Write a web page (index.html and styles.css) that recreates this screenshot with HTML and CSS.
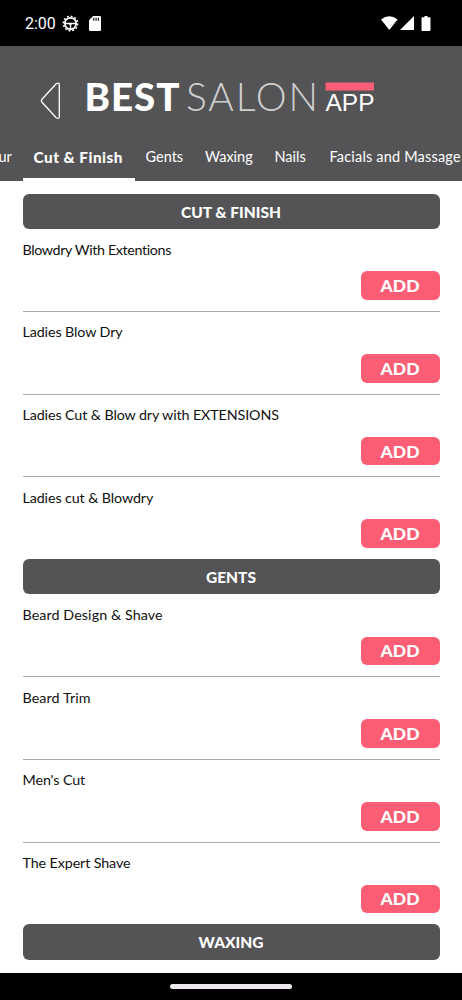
FILE: index.html
```html
<!DOCTYPE html>
<html lang="en">
<head>
  <meta charset="utf-8">
  <meta name="viewport" content="width=device-width, initial-scale=1">
  <title>Best Salon App</title>
  <link rel="stylesheet" href="styles.css">
</head>
<body>
  <div class="status-bar">
    <span class="clock">2:00</span>
    <svg class="gear" width="17" height="17" viewBox="0 0 17 17">
      <circle cx="8.5" cy="8.5" r="7.2" fill="none" stroke="#fff" stroke-width="1.5" stroke-dasharray="1.9 1.87"/>
      <circle cx="8.5" cy="8.5" r="5.7" fill="none" stroke="#fff" stroke-width="1.7"/>
      <path d="M3 8.5h11M8.5 8.5v5.5" stroke="#fff" stroke-width="1.4"/>
      <path d="M6.5 8h4L8.5 11Z" fill="#fff"/>
    </svg>
    <svg class="sd-card" width="12" height="15" viewBox="0 0 12 15">
      <path d="M4.2 0H10.7Q12 0 12 1.3V13.7Q12 15 10.7 15H1.3Q0 15 0 13.7V4.2Z" fill="#fff"/>
      <path d="M4.8 1.7v3M7.1 1.7v3M9.4 1.7v3" stroke="#000" stroke-width="1.1"/>
    </svg>
    <svg class="signals" width="50" height="15" viewBox="0 0 50 15">
      <path d="M0 3.6Q8.3 -3.1 16.6 3.6L8.3 14Z" fill="#fff"/>
      <path d="M33 0V14H19Z" fill="#fff"/>
      <path d="M43.5 0h3v1.2h2.3q.7 0 .7.7v12.2q0 .9-.9.9h-7.2q-.9 0-.9-.9v-12.2q0-.7.7-.7h2.3z" fill="#fff"/>
    </svg>
  </div>

  <header class="header">
    <div class="brand">
      <svg class="back" width="21" height="38" viewBox="0 0 21 38">
        <path d="M16.2 1.8L2 17.3Q.7 18.8 2 20.3L16.2 35.7Q19.3 37.6 19.3 34.5V3Q19.3 0 16.2 1.8Z" fill="none" stroke="#fff" stroke-width="1.3"/>
      </svg>
      <svg class="logo" width="290" height="36" viewBox="0 0 290 36">
        <text class="logo-best" x="-2.5" y="31.5" textLength="95">BEST</text>
        <text class="logo-salon" x="99" y="31.5" textLength="132">SALON</text>
        <rect x="238.5" y="3.5" width="48.5" height="8" fill="#fb5e77"/>
        <text class="logo-app" x="238.5" y="31.5" textLength="49">APP</text>
      </svg>
    </div>
    <nav class="tabs">
      <a class="tab tab-colour">ur</a>
      <a class="tab tab-cut active">Cut &amp; Finish</a>
      <a class="tab tab-gents">Gents</a>
      <a class="tab tab-waxing">Waxing</a>
      <a class="tab tab-nails">Nails</a>
      <a class="tab tab-facials">Facials and Massage</a>
    </nav>
  </header>

  <main class="services">
    <section>
      <h2 class="category">CUT &amp; FINISH</h2>
      <div class="item"><span class="name name-tight">Blowdry With Extentions</span><button class="add">ADD</button></div>
      <div class="item"><span class="name">Ladies Blow Dry</span><button class="add">ADD</button></div>
      <div class="item"><span class="name">Ladies Cut &amp; Blow dry with EXTENSIONS</span><button class="add">ADD</button></div>
      <div class="item"><span class="name">Ladies cut &amp; Blowdry</span><button class="add">ADD</button></div>
    </section>
    <section>
      <h2 class="category">GENTS</h2>
      <div class="item"><span class="name name-wide">Beard Design &amp; Shave</span><button class="add">ADD</button></div>
      <div class="item"><span class="name name-wide">Beard Trim</span><button class="add">ADD</button></div>
      <div class="item"><span class="name">Men's Cut</span><button class="add">ADD</button></div>
      <div class="item"><span class="name">The Expert Shave</span><button class="add">ADD</button></div>
    </section>
    <section>
      <h2 class="category">WAXING</h2>
    </section>
  </main>

  <footer class="nav-bar"><div class="handle"></div></footer>
</body>
</html>
```
FILE: styles.css
```css
* { box-sizing: border-box; }
body { margin: 0; width: 462px; height: 1000px; display: flex; flex-direction: column; overflow: hidden; background: #fff; font-family: Lato, sans-serif; font-variant-ligatures: none; }

.status-bar { height: 46px; flex: none; display: flex; align-items: center; padding: 1px 31px 0 25px; background: #000; color: #fff; }
.clock { width: 37px; font: 16px Roboto, sans-serif; }
.sd-card { margin-left: 10px; }
.signals { margin-left: auto; }

.header { height: 135px; flex: none; display: flex; flex-direction: column; background: #545456; color: #fff; }
.brand { height: 88px; display: flex; align-items: flex-start; padding: 36px 0 0 40px; }
.logo { margin: -3px 0 0 26px; overflow: visible; }
.logo text { fill: #fff; }
.logo .logo-best { font: 900 38.5px Lato, sans-serif; }
.logo .logo-salon { font: 300 39px Lato, sans-serif; fill: #d0d0d1; }
.logo .logo-app { font: 400 24.5px "Liberation Sans", sans-serif; }

.tabs { flex: 1; display: flex; }
.tab { flex: none; padding: 14px 0 0 11px; font-size: 14.5px; line-height: 18px; white-space: nowrap; border-bottom: 3px solid transparent; }
.tab-colour { width: 22.5px; padding-left: 0; text-indent: -1.5px; }
.tab-cut { width: 112px; }
.tab-gents { width: 59.5px; }
.tab-waxing { width: 69.5px; }
.tab-nails { width: 55px; }
.tab-facials { width: 143.5px; letter-spacing: 0.18px; }
.active { font-size: 15.3px; font-weight: 900; letter-spacing: 0.5px; border-color: #fff; }

.services { flex: 1; padding: 12.7px 22.5px 0; }
.category { height: 35.5px; margin: 0; border-radius: 6px; background: #545456; color: #fff; font-size: 15.5px; font-weight: 900; line-height: 36px; text-align: center; }
.item { height: 82.75px; display: flex; flex-direction: column; justify-content: space-between; padding: 10.5px 0 11px; border-bottom: 1px solid #aaa; }
.item:last-child { height: 81.5px; border: none; }
.name { color: #111; font-size: 14.3px; line-height: 19px; letter-spacing: -0.11px; }
.name-tight { letter-spacing: -0.37px; }
.name-wide { letter-spacing: 0.08px; }
.add { width: 79px; height: 28.5px; align-self: flex-end; padding: 0; border: none; border-radius: 6px; background: #fb5e74; color: #fff; font: 900 17.5px Lato, sans-serif; }

.nav-bar { height: 27px; flex: none; display: flex; justify-content: center; padding-top: 11px; background: #000; }
.handle { width: 122px; height: 5px; border-radius: 3px; background: #ece7ec; }
```
